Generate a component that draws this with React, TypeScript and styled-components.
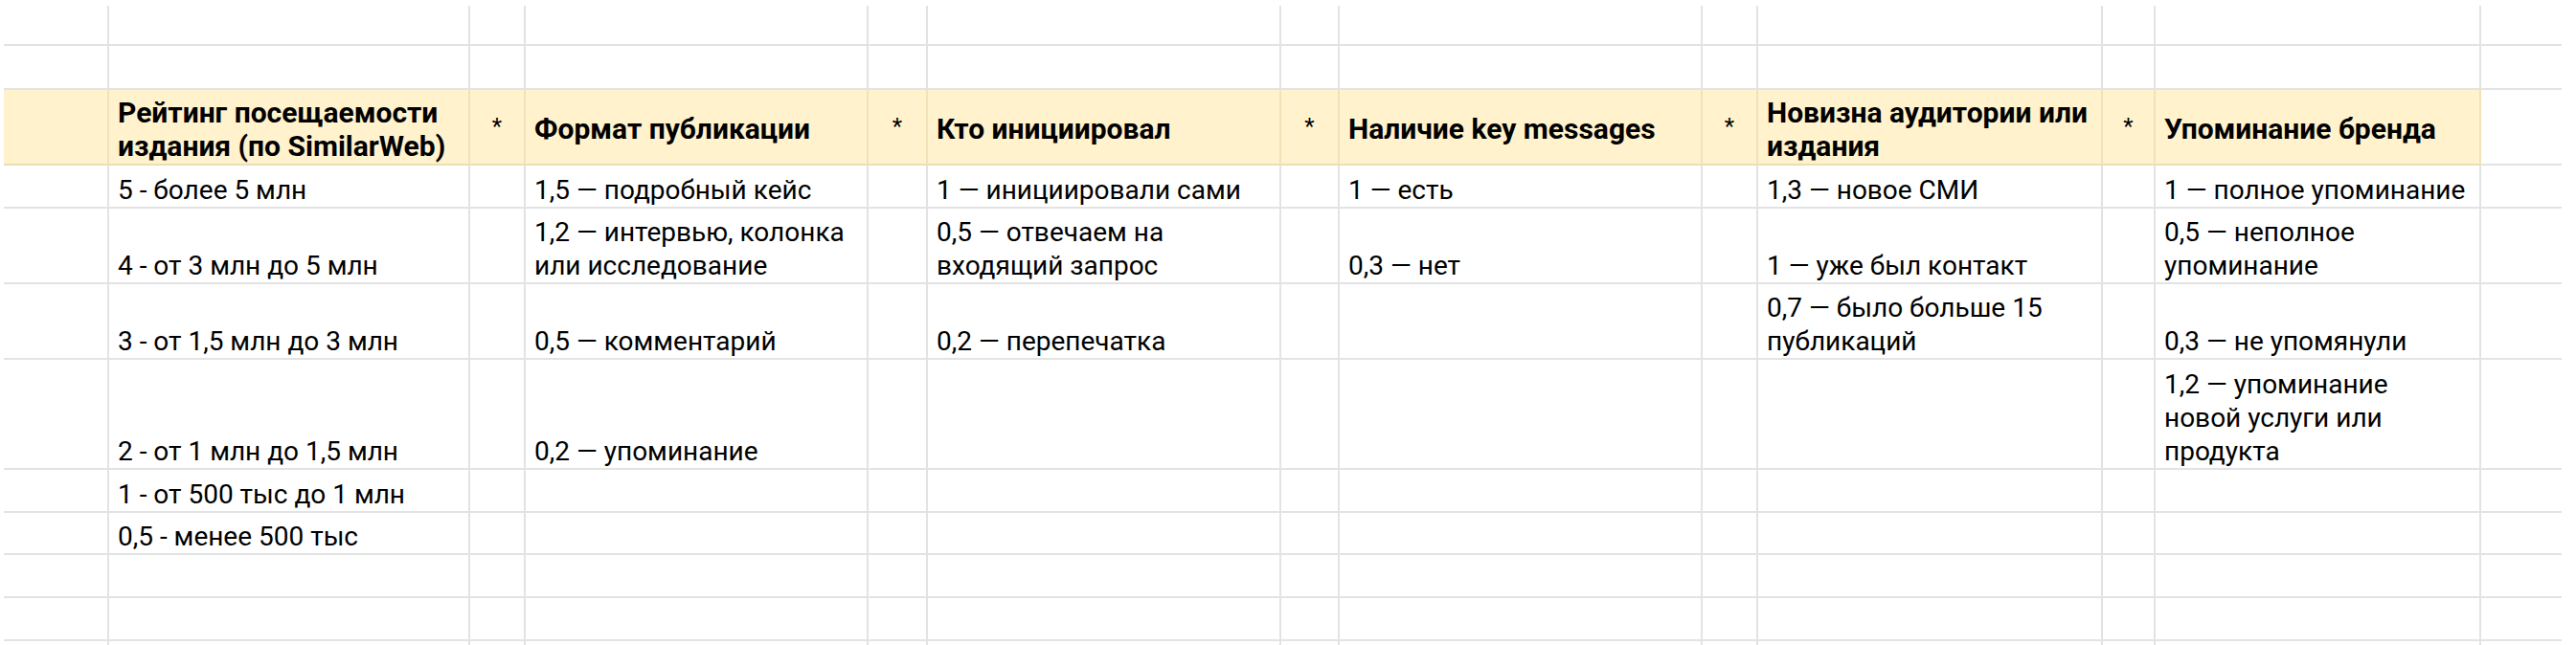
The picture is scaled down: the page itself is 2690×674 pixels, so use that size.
import styled, { createGlobalStyle, css } from "styled-components";
import { Fragment } from "react";

const GlobalStyle = createGlobalStyle`
  html, body {
    margin: 0;
    padding: 0;
    background: #ffffff;
  }
  body {
    overflow: hidden;
    font-family: Roboto, "Noto Sans", "Liberation Sans", sans-serif;
  }
`;

// column widths of the sheet, left to right (last one is cut by the window)
const COLUMNS = "110px 377px 58px 358px 62px 369px 61px 379px 58px 360px 55px 340px 84px";

const Page = styled.div`
  width: 2690px;
  height: 674px;
  box-sizing: border-box;
  padding: 6px 0 0 4px;
  overflow: hidden;
`;

const Sheet = styled.div`
  display: grid;
  grid-template-columns: ${COLUMNS};
`;

type Kind = "plain" | "head" | "star";

const Cell = styled.div<{ $kind: Kind; $h: number; $lastCol: boolean }>`
  box-sizing: border-box;
  height: ${(p) => p.$h}px;
  display: flex;
  align-items: flex-end;
  padding: 0 4px 0 9px;
  border-right: 2px solid #e2e3e3;
  border-bottom: 2px solid #e2e3e3;
  font-size: 28px;
  line-height: 35px;
  color: #000000;
  white-space: pre-line;
  overflow: hidden;

  ${(p) =>
    p.$lastCol &&
    css`
      border-right: none;
    `}

  ${(p) =>
    p.$kind === "head" &&
    css`
      background: #fff2cc;
      border-right-color: #efe3b8;
      border-bottom-color: #ebdfb6;
      font-size: 30px;
      font-weight: 700;
      line-height: 35px;
      align-items: center;
      padding-top: 4px;
    `}

  ${(p) =>
    p.$kind === "star" &&
    css`
      background: #fff2cc;
      border-right-color: #efe3b8;
      border-bottom-color: #ebdfb6;
      justify-content: center;
      align-items: center;
      padding: 0;
      font-size: 24px;
    `}
`;

type Row = { height: number; header?: boolean; cells: string[] };

const empty = (): string[] => Array(13).fill("");

const body = (values: Record<number, string>): string[] => {
  const cells = empty();
  Object.keys(values).forEach((k) => {
    cells[Number(k)] = values[Number(k)];
  });
  return cells;
};

const rows: Row[] = [
  { height: 42, cells: empty() },
  { height: 46, cells: empty() },
  {
    height: 79,
    header: true,
    cells: [
      "",
      "Рейтинг посещаемости\nиздания (по SimilarWeb)",
      "*",
      "Формат публикации",
      "*",
      "Кто инициировал",
      "*",
      "Наличие key messages",
      "*",
      "Новизна аудитории или\nиздания",
      "*",
      "Упоминание бренда",
      "",
    ],
  },
  {
    height: 45,
    cells: body({
      1: "5 - более 5 млн",
      3: "1,5 — подробный кейс",
      5: "1 — инициировали сами",
      7: "1 — есть",
      9: "1,3 — новое СМИ",
      11: "1 — полное упоминание",
    }),
  },
  {
    height: 79,
    cells: body({
      1: "4 - от 3 млн до 5 млн",
      3: "1,2 — интервью, колонка\nили исследование",
      5: "0,5 — отвечаем на\nвходящий запрос",
      7: "0,3 — нет",
      9: "1 — уже был контакт",
      11: "0,5 — неполное\nупоминание",
    }),
  },
  {
    height: 79,
    cells: body({
      1: "3 - от 1,5 млн до 3 млн",
      3: "0,5 — комментарий",
      5: "0,2 — перепечатка",
      9: "0,7 — было больше 15\nпубликаций",
      11: "0,3 — не упомянули",
    }),
  },
  {
    height: 115,
    cells: body({
      1: "2 - от 1 млн до 1,5 млн",
      3: "0,2 — упоминание",
      11: "1,2 — упоминание\nновой услуги или\nпродукта",
    }),
  },
  { height: 45, cells: body({ 1: "1 - от 500 тыс до 1 млн" }) },
  { height: 44, cells: body({ 1: "0,5 - менее 500 тыс" }) },
  { height: 45, cells: empty() },
  { height: 45, cells: empty() },
  { height: 45, cells: empty() },
];

function kindOf(row: Row, col: number): Kind {
  if (!row.header || col === 12) return "plain";
  if (col > 0 && col % 2 === 0) return "star";
  return "head";
}

function App() {
  return (
    <Fragment>
      <GlobalStyle />
      <Page>
        <Sheet>
          {rows.map((row, r) =>
            row.cells.map((text, c) => (
              <Cell
                key={r + "-" + c}
                $kind={kindOf(row, c)}
                $h={row.height}
                $lastCol={c === 12}
              >
                {text}
              </Cell>
            ))
          )}
        </Sheet>
      </Page>
    </Fragment>
  );
}

export default App;
